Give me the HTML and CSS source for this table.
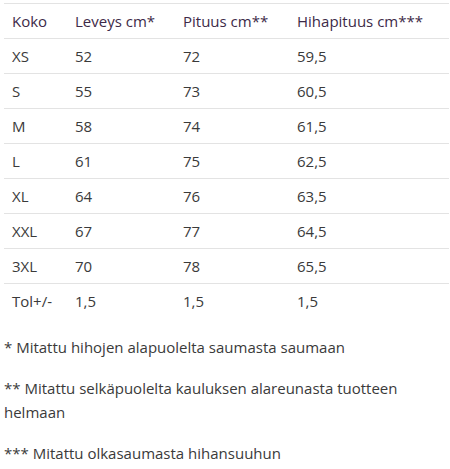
FILE: index.html
```html
<!DOCTYPE html>
<html lang="fi">
<head>
<meta charset="utf-8">
<title>Kokotaulukko</title>
<link rel="stylesheet" href="styles.css">
</head>
<body>
<div class="page">
  <table class="size-table">
    <thead>
      <tr>
        <th class="c1">Koko</th>
        <th class="c2">Leveys cm*</th>
        <th class="c3">Pituus cm**</th>
        <th class="c4">Hihapituus cm***</th>
      </tr>
    </thead>
    <tbody>
      <tr><td>XS</td><td>52</td><td>72</td><td>59,5</td></tr>
      <tr><td>S</td><td>55</td><td>73</td><td>60,5</td></tr>
      <tr><td>M</td><td>58</td><td>74</td><td>61,5</td></tr>
      <tr><td>L</td><td>61</td><td>75</td><td>62,5</td></tr>
      <tr><td>XL</td><td>64</td><td>76</td><td>63,5</td></tr>
      <tr><td>XXL</td><td>67</td><td>77</td><td>64,5</td></tr>
      <tr><td>3XL</td><td>70</td><td>78</td><td>65,5</td></tr>
      <tr><td>Tol+/-</td><td>1,5</td><td>1,5</td><td>1,5</td></tr>
    </tbody>
  </table>
  <p class="note">* Mitattu hihojen alapuolelta saumasta saumaan</p>
  <p class="note">** Mitattu selkäpuolelta kauluksen alareunasta tuotteen helmaan</p>
  <p class="note">*** Mitattu olkasaumasta hihansuuhun</p>
</div>
</body>
</html>
```
FILE: styles.css
```css
html, body {
  margin: 0;
  padding: 0;
  background: #ffffff;
}
body {
  font-family: "Open Sans", "Liberation Sans", sans-serif;
  font-size: 15px;
  color: #3a3a3a;
}
.page {
  padding: 3px 1px 0 4px;
}
.size-table {
  width: 445px;
  border-collapse: collapse;
  table-layout: fixed;
}
.size-table th,
.size-table td {
  text-align: left;
  font-weight: normal;
  padding: 8px 8px;
  line-height: 18px;
  border-top: 1px solid #e3e3e3;
  white-space: nowrap;
}
.size-table th {
  color: #3d2a48;
}
.size-table .c1 { width: 47px; }
.size-table .c2 { width: 92px; }
.size-table .c3 { width: 98px; }
.size-table .c4 { width: auto; }
.note {
  margin: 17px 0 0;
  line-height: 24px;
}
```
